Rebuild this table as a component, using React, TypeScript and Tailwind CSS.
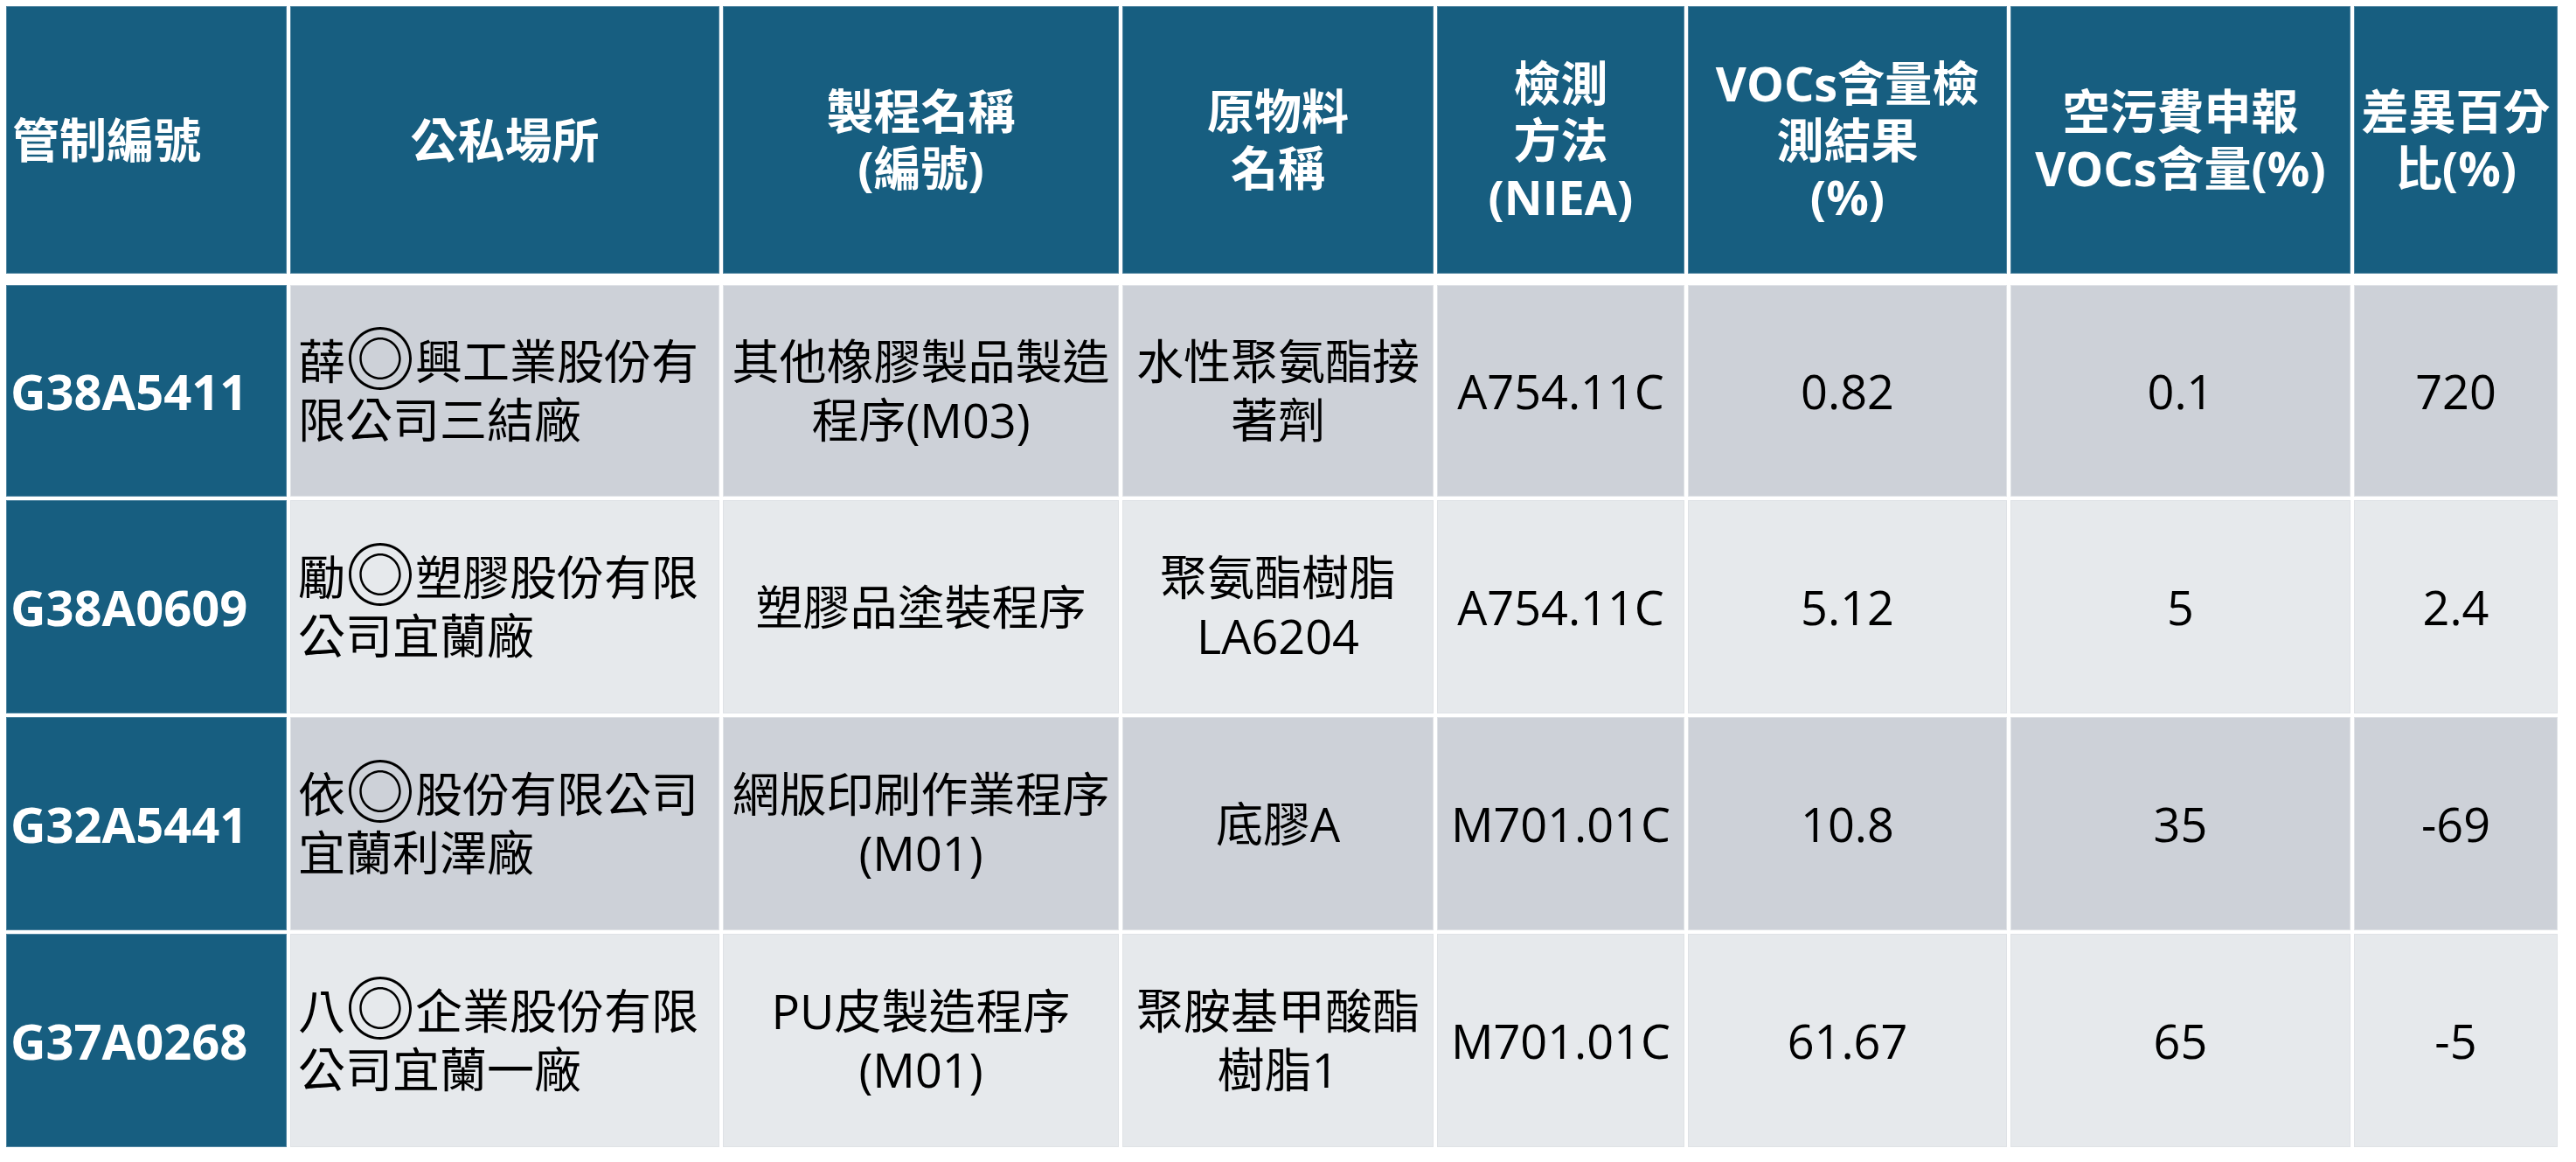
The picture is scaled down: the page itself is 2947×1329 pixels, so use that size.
const cols = "grid grid-cols-[321px_491px_453px_356px_283px_365px_389px_233px] gap-x-[4px]";

const headers: { lines: string[]; left?: boolean }[] = [
  { lines: ["管制編號"], left: true },
  { lines: ["公私場所"] },
  { lines: ["製程名稱", "(編號)"] },
  { lines: ["原物料", "名稱"] },
  { lines: ["檢測", "方法", "(NIEA)"] },
  { lines: ["VOCs含量檢", "測結果", "(%)"] },
  { lines: ["空污費申報", "VOCs含量(%)"] },
  { lines: ["差異百分", "比(%)"] },
];

type Row = {
  id: string;
  place: string[];
  process: string[];
  material: string[];
  method: string;
  result: string;
  declared: string;
  diff: string;
  h: string;
  bg: string;
};

const rows: Row[] = [
  {
    id: "G38A5411",
    place: ["薛◎興工業股份有", "限公司三結廠"],
    process: ["其他橡膠製品製造", "程序(M03)"],
    material: ["水性聚氨酯接", "著劑"],
    method: "A754.11C",
    result: "0.82",
    declared: "0.1",
    diff: "720",
    h: "h-[242px]",
    bg: "bg-[#cdd1d8]",
  },
  {
    id: "G38A0609",
    place: ["勵◎塑膠股份有限", "公司宜蘭廠"],
    process: ["塑膠品塗裝程序"],
    material: ["聚氨酯樹脂", "LA6204"],
    method: "A754.11C",
    result: "5.12",
    declared: "5",
    diff: "2.4",
    h: "h-[244px]",
    bg: "bg-[#e6e9ec]",
  },
  {
    id: "G32A5441",
    place: ["依◎股份有限公司", "宜蘭利澤廠"],
    process: ["網版印刷作業程序", "(M01)"],
    material: ["底膠A"],
    method: "M701.01C",
    result: "10.8",
    declared: "35",
    diff: "-69",
    h: "h-[244px]",
    bg: "bg-[#cdd1d8]",
  },
  {
    id: "G37A0268",
    place: ["八◎企業股份有限", "公司宜蘭一廠"],
    process: ["PU皮製造程序", "(M01)"],
    material: ["聚胺基甲酸酯", "樹脂1"],
    method: "M701.01C",
    result: "61.67",
    declared: "65",
    diff: "-5",
    h: "h-[244px]",
    bg: "bg-[#e6e9ec]",
  },
];

const Lines = ({ lines }: { lines: string[] }) => (
  <div>
    {lines.map((l) => (
      <div key={l} className="whitespace-nowrap">
        {l}
      </div>
    ))}
  </div>
);

// company names: the masked character ◎ is drawn larger than the text
const Place = ({ lines }: { lines: string[] }) => (
  <div>
    {lines.map((l) => {
      const parts = l.split("◎");
      return (
        <div key={l} className="whitespace-nowrap">
          {parts.length > 1 ? (
            <>
              {parts[0]}
              <span className="relative top-[6px] text-[80px] leading-[0px]">◎</span>
              {parts[1]}
            </>
          ) : (
            l
          )}
        </div>
      );
    })}
  </div>
);

export default function App() {
  return (
    <div
      className="w-[2947px] h-[1329px] bg-white pl-[7px] pt-[7px] overflow-hidden"
      style={{ fontFamily: '"Open Sans", "Noto Sans CJK TC", sans-serif' }}
    >
      <div className={cols}>
        {headers.map((h, i) => (
          <div
            key={i}
            className={
              "h-[306px] bg-[#175e80] border border-[#4f84a0] text-white font-bold text-[54px] leading-[65px] flex items-center " +
              (h.left ? "justify-start pl-[6px]" : "justify-center text-center")
            }
          >
            <Lines lines={h.lines} />
          </div>
        ))}
      </div>

      <div className={cols + " mt-[13px] gap-y-[4px]"}>
        {rows.map((r) => (
          <div key={r.id} className="contents">
            <div
              className={`${r.h} bg-[#175e80] border border-[#4f84a0] text-white font-bold text-[56px] flex items-center pl-[4px]`}
            >
              {r.id}
            </div>
            <div
              className={`${r.h} ${r.bg} border border-[#dfe2e6] text-black text-[54px] leading-[67px] flex items-center pl-[8px]`}
            >
              <Place lines={r.place} />
            </div>
            <div
              className={`${r.h} ${r.bg} border border-[#dfe2e6] text-black text-[54px] leading-[67px] flex items-center justify-center text-center`}
            >
              <Lines lines={r.process} />
            </div>
            <div
              className={`${r.h} ${r.bg} border border-[#dfe2e6] text-black text-[54px] leading-[67px] flex items-center justify-center text-center`}
            >
              <Lines lines={r.material} />
            </div>
            <div
              className={`${r.h} ${r.bg} border border-[#dfe2e6] text-black text-[54px] flex items-center justify-center`}
            >
              {r.method}
            </div>
            <div
              className={`${r.h} ${r.bg} border border-[#dfe2e6] text-black text-[54px] flex items-center justify-center`}
            >
              {r.result}
            </div>
            <div
              className={`${r.h} ${r.bg} border border-[#dfe2e6] text-black text-[54px] flex items-center justify-center`}
            >
              {r.declared}
            </div>
            <div
              className={`${r.h} ${r.bg} border border-[#dfe2e6] text-black text-[54px] flex items-center justify-center`}
            >
              {r.diff}
            </div>
          </div>
        ))}
      </div>
    </div>
  );
}
